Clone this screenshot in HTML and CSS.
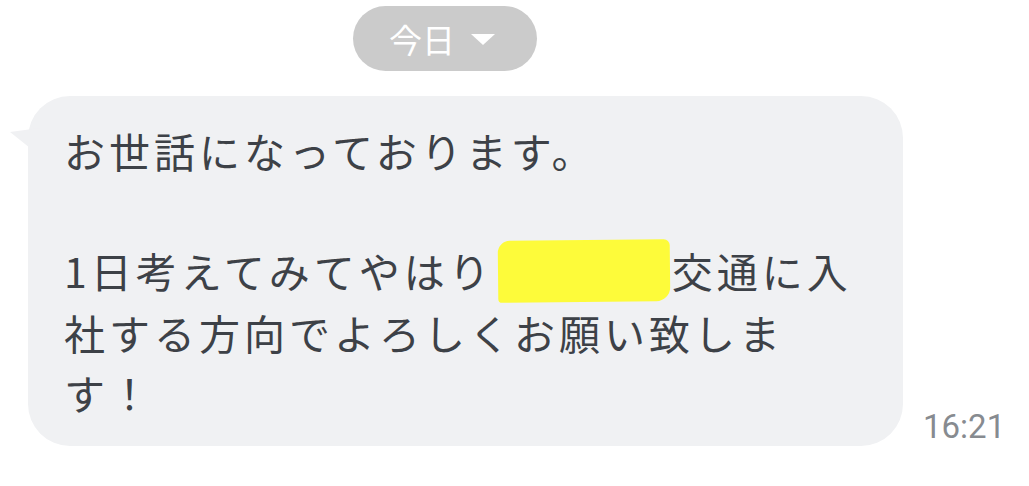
FILE: index.html
```html
<!DOCTYPE html>
<html lang="ja">
<head>
  <meta charset="UTF-8">
  <meta name="viewport" content="width=device-width, initial-scale=1.0">
  <title>トーク</title>
  <link rel="stylesheet" href="styles.css">
</head>
<body>
  <div class="date-row">
    <div class="date-pill">
      <span>今日</span>
      <svg class="caret" width="24" height="12" viewBox="0 0 24 12"><path d="M0 0 L24 0 L12 11 Z" fill="#fff"/></svg>
    </div>
  </div>
  <div class="message-row">
    <div class="bubble">
      <svg class="tail" width="30" height="28" viewBox="0 0 30 28"><path d="M0 4 L30 0 L30 28 Z" fill="#f0f1f3"/></svg>
      <p class="text">お世話になっております。<br><br>1日考えてみてやはり<span class="redact"></span>交通に入<br>社する方向でよろしくお願い致しま<br>す！</p>
    </div>
    <div class="time">16:21</div>
  </div>
</body>
</html>
```

FILE: styles.css
```css
body {
  margin: 0;
  background: #fff;
  font-family: "Noto Sans CJK JP", "Noto Sans", sans-serif;
  color: #3d4147;
}
.date-row {
  display: flex;
  padding: 6px 0 0 353px;
}
.date-pill {
  width: 184px;
  height: 65px;
  border-radius: 33px;
  background: #cbcbcb;
  color: #fff;
  display: flex;
  align-items: center;
  justify-content: center;
  gap: 16px;
  font-size: 33px;
}
.date-pill span {
  margin-left: -6px;
}
.caret {
  margin-top: 2px;
}
.message-row {
  display: flex;
  align-items: flex-end;
  gap: 20px;
  padding: 25px 0 0 28px;
}
.bubble {
  position: relative;
  width: 875px;
  box-sizing: border-box;
  background: #f0f1f3;
  border-radius: 42px;
  padding: 24px 30px 24px 36px;
}
.tail {
  position: absolute;
  left: -18px;
  top: 32px;
}
.text {
  margin: 0;
  font-size: 41px;
  letter-spacing: 4px;
  line-height: 60px;
}
.redact {
  display: inline-block;
  width: 172px;
  height: 62px;
  margin-left: 4px;
  margin-right: 2px;
  vertical-align: top;
  background: #fdfb3a;
  border-radius: 12px 6px 14px 4px;
  transform: rotate(-0.6deg);
}
.time {
  color: #878b90;
  font-size: 33px;
  font-family: "Roboto", "Noto Sans", sans-serif;
  margin-bottom: 0;
}
```
